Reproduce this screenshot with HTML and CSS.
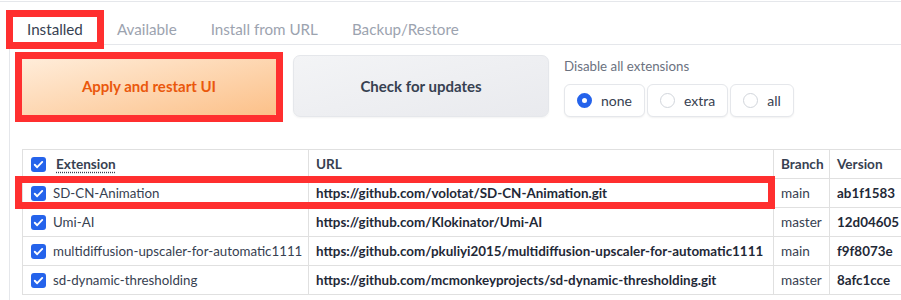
FILE: index.html
```html
<!DOCTYPE html>
<html>
<head>
<meta charset="utf-8">
<link rel="stylesheet" href="styles.css">
</head>
<body>
<div class="page">
  <div class="topline"></div>
  <div class="tabs">
    <div class="tab active">Installed</div>
    <div class="tab">Available</div>
    <div class="tab">Install from URL</div>
    <div class="tab">Backup/Restore</div>
    <div class="tab-rest"></div>
  </div>
  <div class="panel">
    <div class="controls">
      <button class="btn primary">Apply and restart UI</button>
      <button class="btn secondary">Check for updates</button>
      <div class="radio-block">
        <div class="radio-label">Disable all extensions</div>
        <div class="radios">
          <label class="radio"><span class="dot on"></span>none</label>
          <label class="radio"><span class="dot"></span>extra</label>
          <label class="radio"><span class="dot"></span>all</label>
        </div>
      </div>
    </div>
    <table class="ext">
      <colgroup>
        <col class="c1"><col class="c2"><col class="c3"><col class="c4">
      </colgroup>
      <thead>
        <tr>
          <th><span class="cell1"><span class="cb"><svg viewBox="0 0 16 16"><path d="M4 8.3l2.6 2.6L12 5.3" fill="none" stroke="#fff" stroke-width="2" stroke-linecap="round" stroke-linejoin="round"/></svg></span><abbr class="hdr">Extension</abbr></span></th>
          <th>URL</th>
          <th>Branch</th>
          <th>Version</th>
        </tr>
      </thead>
      <tbody>
        <tr>
          <td><span class="cell1"><span class="cb"><svg viewBox="0 0 16 16"><path d="M4 8.3l2.6 2.6L12 5.3" fill="none" stroke="#fff" stroke-width="2" stroke-linecap="round" stroke-linejoin="round"/></svg></span>SD-CN-Animation</span></td>
          <td class="url">https://github.com/volotat/SD-CN-Animation.git</td>
          <td>main</td>
          <td class="ver">ab1f1583</td>
        </tr>
        <tr>
          <td><span class="cell1"><span class="cb"><svg viewBox="0 0 16 16"><path d="M4 8.3l2.6 2.6L12 5.3" fill="none" stroke="#fff" stroke-width="2" stroke-linecap="round" stroke-linejoin="round"/></svg></span>Umi-AI</span></td>
          <td class="url">https://github.com/Klokinator/Umi-AI</td>
          <td>master</td>
          <td class="ver">12d04605</td>
        </tr>
        <tr>
          <td><span class="cell1"><span class="cb"><svg viewBox="0 0 16 16"><path d="M4 8.3l2.6 2.6L12 5.3" fill="none" stroke="#fff" stroke-width="2" stroke-linecap="round" stroke-linejoin="round"/></svg></span>multidiffusion-upscaler-for-automatic1111</span></td>
          <td class="url">https://github.com/pkuliyi2015/multidiffusion-upscaler-for-automatic1111</td>
          <td>main</td>
          <td class="ver">f9f8073e</td>
        </tr>
        <tr>
          <td><span class="cell1"><span class="cb"><svg viewBox="0 0 16 16"><path d="M4 8.3l2.6 2.6L12 5.3" fill="none" stroke="#fff" stroke-width="2" stroke-linecap="round" stroke-linejoin="round"/></svg></span>sd-dynamic-thresholding</span></td>
          <td class="url">https://github.com/mcmonkeyprojects/sd-dynamic-thresholding.git</td>
          <td>master</td>
          <td class="ver">8afc1cce</td>
        </tr>
      </tbody>
    </table>
  </div>
  <div class="mark mark-tab"></div>
  <div class="mark mark-apply"></div>
  <div class="mark mark-row"></div>
</div>
</body>
</html>
```
FILE: styles.css
```css
html, body {
  margin: 0;
  padding: 0;
  background: #fff;
  overflow: hidden;
}
.page {
  position: relative;
  width: 901px;
  height: 300px;
  overflow: hidden;
  font-family: Lato, "Liberation Sans", sans-serif;
  color: #374151;
}
.topline {
  margin-top: 1px;
  height: 0;
  border-top: 1px solid #e5e7eb;
}
.tabs {
  display: flex;
  margin-top: 13px;
  padding-left: 10px;
}
.tab {
  padding: 0 17px;
  height: 29px;
  line-height: 29px;
  font-size: 15.2px;
  color: #9ca3af;
  border-bottom: 1px solid #e5e7eb;
  white-space: nowrap;
}
.tab.active {
  color: #374151;
  border-bottom-color: transparent;
}
.tab-rest {
  flex: 1;
  border-bottom: 1px solid #e5e7eb;
}
.panel {
  margin-left: 9px;
  border-left: 1px solid #e5e7eb;
  padding: 10px 0 0 10px;
  height: 260px;
}
.controls {
  display: flex;
  align-items: flex-start;
  gap: 15px;
}
.btn {
  height: 62px;
  border-radius: 7px;
  font-family: inherit;
  font-size: 15px;
  font-weight: 700;
  border: 1px solid #e5e7eb;
  padding: 0;
}
.primary {
  width: 258px;
  background: linear-gradient(to bottom right, #ffeedc, #fcc088);
  border-color: #fed7aa;
  color: #ea580c;
}
.secondary {
  width: 256px;
  background: linear-gradient(to bottom right, #f3f4f6, #e9eaee);
  color: #374151;
  box-shadow: 0 1px 2px rgba(0,0,0,0.05);
}
.radio-block {
  display: flex;
  flex-direction: column;
}
.radio-label {
  font-size: 13.3px;
  color: #6b7280;
  margin-top: 3px;
  line-height: 16px;
}
.radios {
  display: flex;
  gap: 2px;
  margin-top: 10px;
}
.radio {
  display: flex;
  align-items: center;
  height: 33px;
  box-sizing: border-box;
  padding: 0 12px 0 12px;
  border: 1px solid #e5e7eb;
  border-radius: 6px;
  font-size: 14px;
  color: #374151;
  box-shadow: 0 1px 2px rgba(0,0,0,0.06);
  background: #fff;
}
.dot {
  width: 15px;
  height: 15px;
  box-sizing: border-box;
  border-radius: 50%;
  border: 1px solid #d1d5db;
  margin-right: 9px;
  background: #fff;
}
.dot.on {
  border: 5px solid #2563eb;
  background: #fff;
}
.ext {
  margin-top: 32px;
  margin-left: 2px;
  border-collapse: collapse;
  table-layout: fixed;
  width: 890px;
  font-size: 13.6px;
}
.c1 { width: 286px; }
.c2 { width: 465px; }
.c3 { width: 56px; }
.c4 { width: 83px; }
.ext th, .ext td {
  border: 1px solid #e0e0e0;
  height: 28px;
  padding: 0 0 0 7px;
  text-align: left;
  white-space: nowrap;
  overflow: hidden;
  color: #374151;
}
.ext th {
  font-weight: 700;
}
.ext td:first-child, .ext th:first-child {
  padding-left: 8px;
}
.ext td:first-child {
  font-size: 13.3px;
}
.cell1 {
  display: flex;
  align-items: center;
  gap: 7px;
}
.cb {
  width: 15px;
  height: 15px;
  border-radius: 3px;
  background: #2563eb;
  display: inline-flex;
  flex: none;
}
.cb svg {
  width: 15px;
  height: 15px;
}
.hdr {
  text-decoration: underline dotted;
  text-underline-offset: 3px;
  margin-left: 3px;
}
.url, .ver {
  font-weight: 700;
  color: #1f2937 !important;
  font-size: 13.4px;
}
.mark {
  position: absolute;
  border: 7px solid #ff2f2f;
  box-sizing: border-box;
}
.mark-tab {
  left: 6px;
  top: 10px;
  width: 98px;
  height: 39px;
}
.mark-apply {
  left: 15px;
  top: 52px;
  width: 268px;
  height: 70px;
}
.mark-row {
  left: 15px;
  top: 176px;
  width: 760px;
  height: 33px;
}
```
